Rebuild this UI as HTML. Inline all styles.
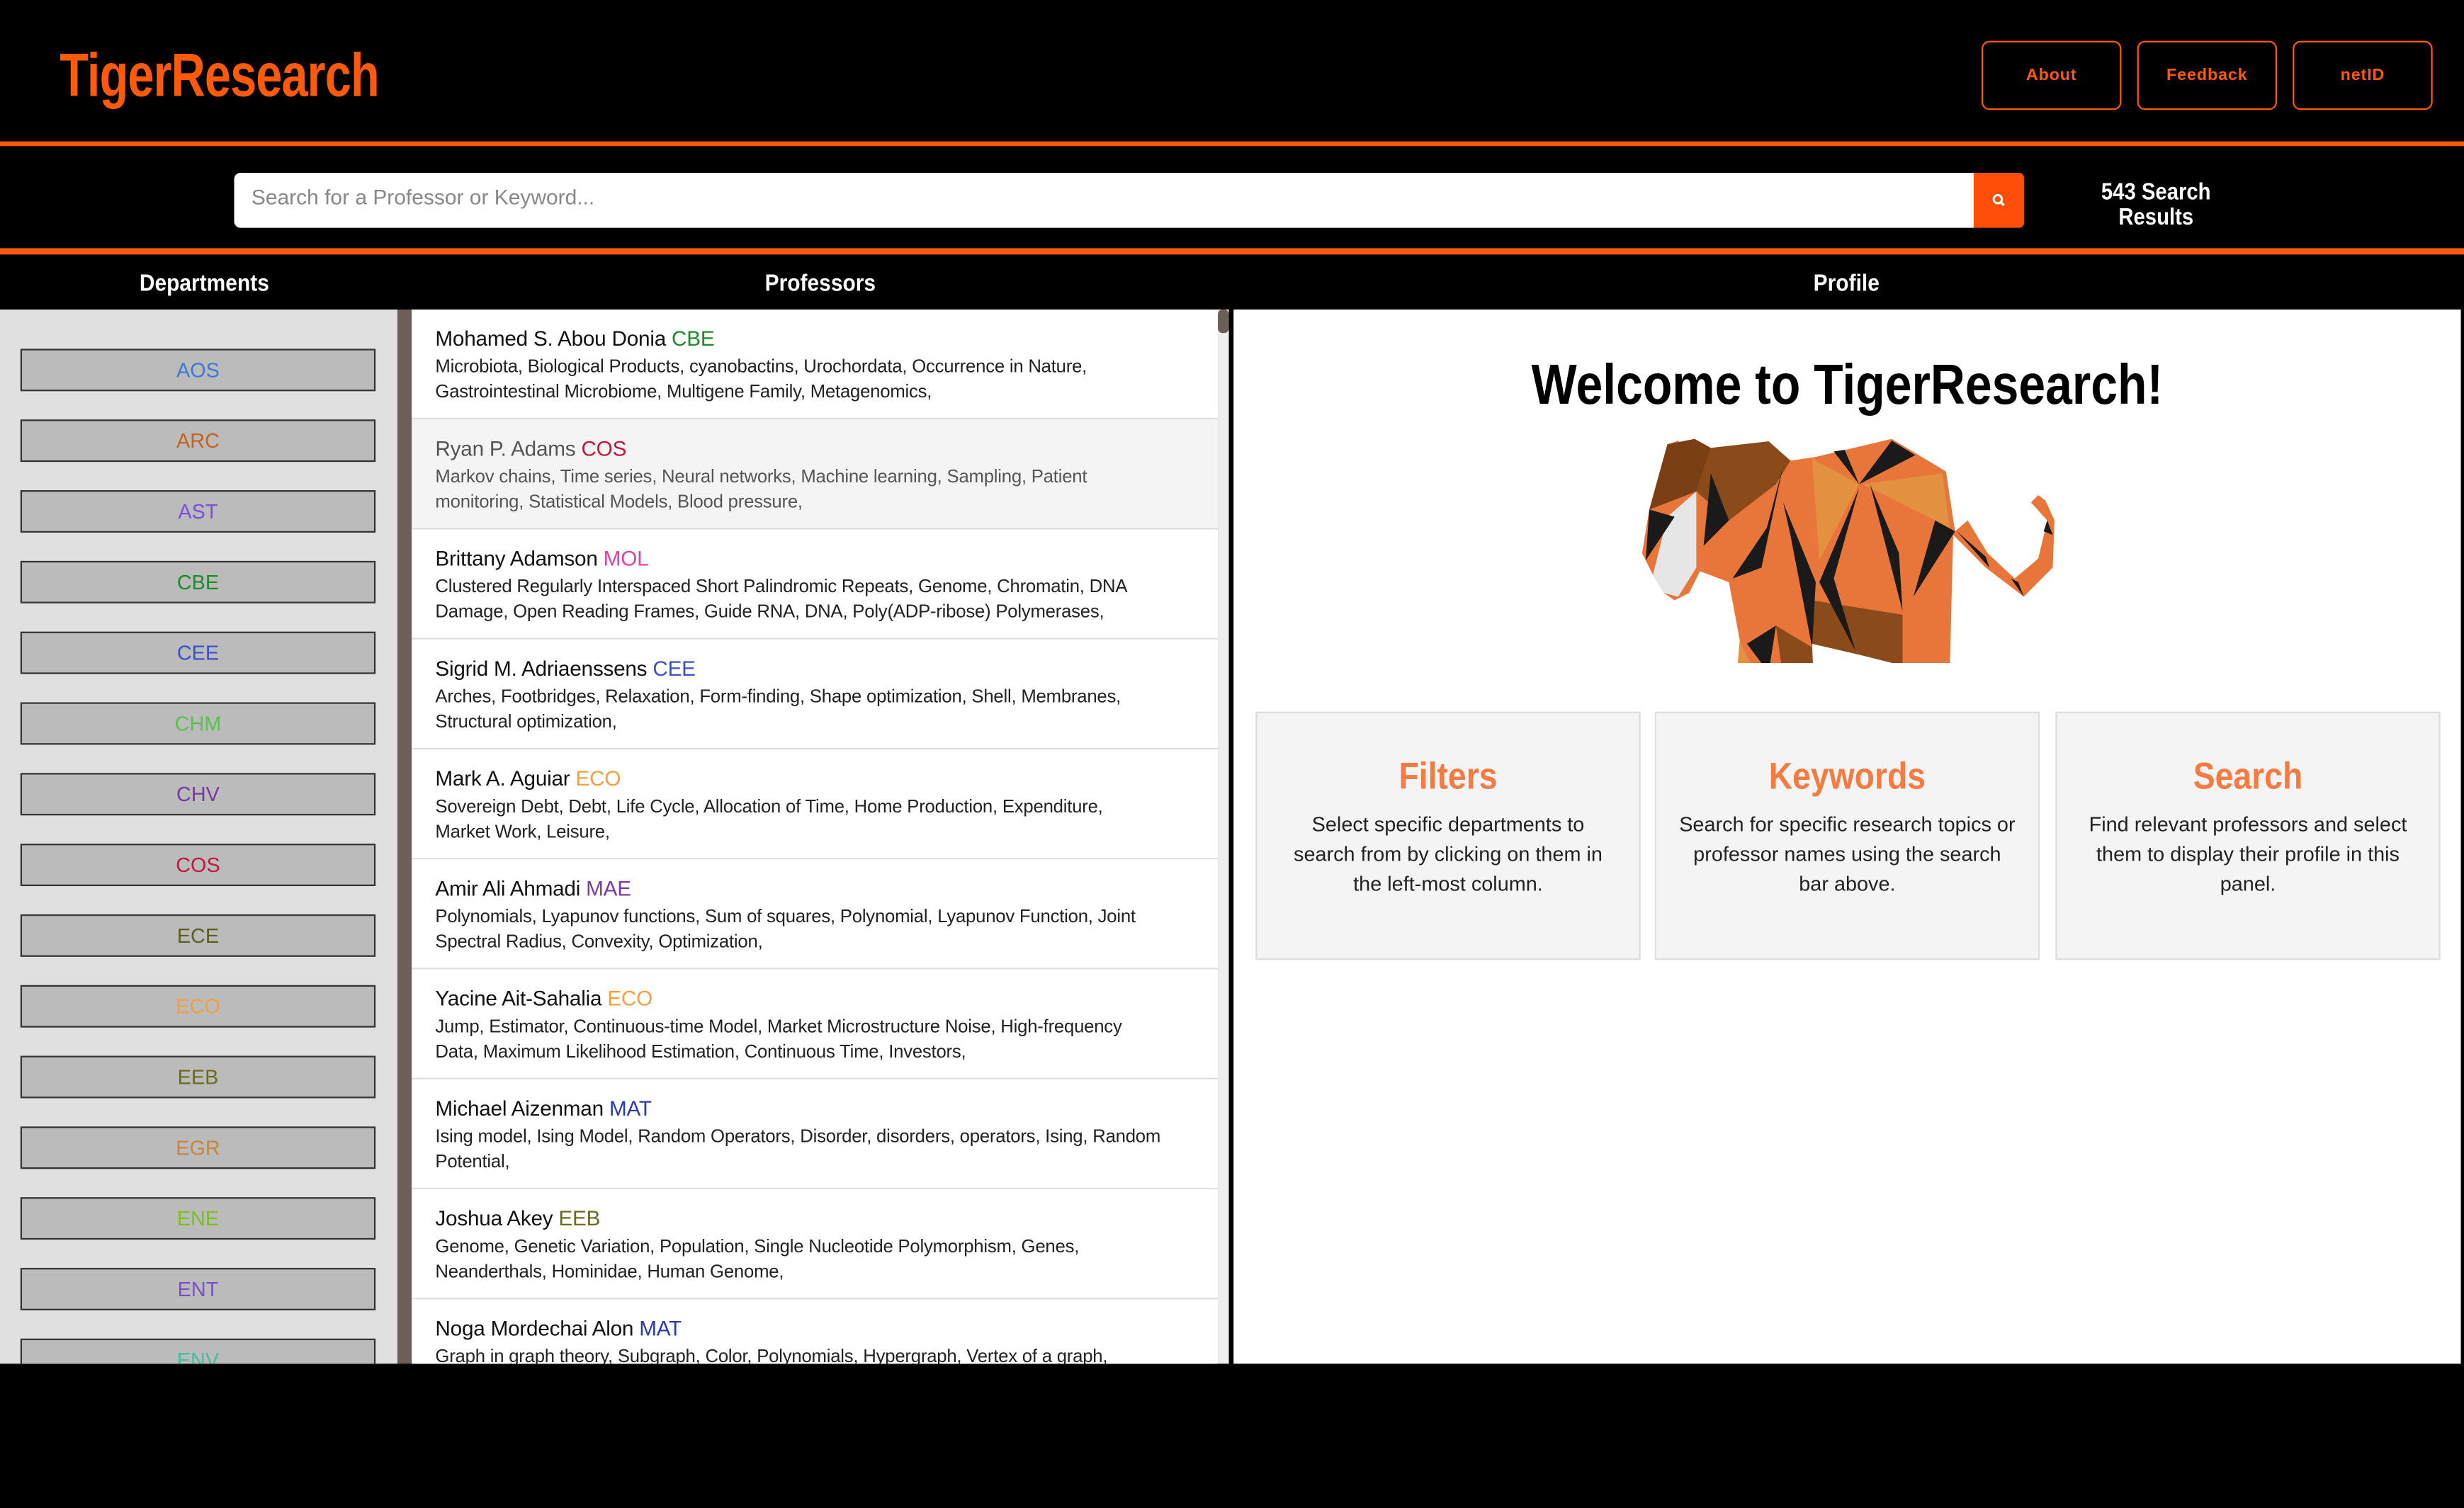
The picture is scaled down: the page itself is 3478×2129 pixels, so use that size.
<!DOCTYPE html>
<html><head><meta charset="utf-8">
<style>
html,body{margin:0;padding:0;background:#000;overflow:hidden;width:3478px;height:2128px}
#w{position:absolute;left:0;top:0;width:1568px;height:960px;transform:scale(2.21811);transform-origin:0 0;font-family:"Liberation Sans",sans-serif;background:#000}
.a{position:absolute}
.logo{left:38px;top:27px;font-weight:bold;font-size:39px;color:#ff5a0a;letter-spacing:-0.5px;transform:scaleX(0.77);transform-origin:0 0}
.btn{top:26px;width:87px;height:42px;border:1.5px solid #ff5a0a;border-radius:5px;color:#ff5a0a;font-size:10.5px;font-weight:bold;text-align:center;line-height:42px;letter-spacing:.4px}
.line{left:0;width:1568px;height:3px;background:#ff5a0a}
.hd{font-weight:bold;color:#fff;font-size:15px;top:172px;transform:translateX(-50%) scaleX(0.9)}
.dept{left:13px;width:224px;height:25px;background:#bbb;border:1.5px solid #333;text-align:center;font-size:13px;line-height:25px}
.row{position:absolute;left:262px;width:513px;height:69px;border-bottom:1.5px solid #ddd;background:#fff;font-size:11.6px;color:#222;letter-spacing:-0.1px}
.row .n{position:absolute;left:15px;top:11px;font-size:13.4px;color:#111}
.row .k{position:absolute;left:15px;top:29px;line-height:16.3px;white-space:nowrap}
.card{top:453px;width:243px;height:156px;background:#f4f4f4;border:1px solid #ddd;text-align:center}
.card h3{margin:27px 0 0;color:#f47b42;font-size:24px;font-weight:bold;transform:scaleX(0.87)}
.card p{margin:6px 0 0;font-size:13px;line-height:19px;color:#222;white-space:nowrap}
</style></head><body><div id="w">
<div class="a logo">TigerResearch</div>
<div class="a btn" style="left:1261px">About</div>
<div class="a btn" style="left:1360px">Feedback</div>
<div class="a btn" style="left:1459px">netID</div>
<div class="a line" style="top:90px"></div>
<div class="a" style="left:149px;top:110px;width:1107px;height:35px;background:#fff;border-radius:4px 0 0 4px"></div>
<div class="a" style="left:160px;top:118px;font-size:13.5px;color:#888">Search for a Professor or Keyword...</div>
<div class="a" style="left:1256px;top:110px;width:32px;height:35px;background:#ff4d0a;border-radius:0 3px 3px 0">
<svg width="32" height="35" viewBox="0 0 32 35"><circle cx="15.3" cy="16.8" r="2.6" fill="none" stroke="#fff" stroke-width="1.4"/><line x1="17.2" y1="18.7" x2="19.2" y2="20.7" stroke="#fff" stroke-width="1.6"/></svg></div>
<div class="a" style="left:1322px;top:115px;width:100px;text-align:center;color:#fff;font-weight:bold;font-size:15px;line-height:16px;transform:scaleX(0.88)">543 Search<br>Results</div>
<div class="a line" style="top:158px;height:4px"></div>
<div class="a hd" style="left:130px">Departments</div>
<div class="a hd" style="left:522px">Professors</div>
<div class="a hd" style="left:1175px">Profile</div>
<div class="a" style="left:0;top:197px;width:253px;height:671px;background:#e0e0e0;overflow:hidden">
<div class="a dept" style="top:25px;color:#3b78d8">AOS</div>
<div class="a dept" style="top:70px;color:#c8601e">ARC</div>
<div class="a dept" style="top:115px;color:#7a4fe0">AST</div>
<div class="a dept" style="top:160px;color:#1f8a2a">CBE</div>
<div class="a dept" style="top:205px;color:#3a4fcc">CEE</div>
<div class="a dept" style="top:250px;color:#59c24a">CHM</div>
<div class="a dept" style="top:295px;color:#7a3aa0">CHV</div>
<div class="a dept" style="top:340px;color:#c0183c">COS</div>
<div class="a dept" style="top:385px;color:#5e5e1a">ECE</div>
<div class="a dept" style="top:430px;color:#f0a040">ECO</div>
<div class="a dept" style="top:475px;color:#6b6b20">EEB</div>
<div class="a dept" style="top:520px;color:#c8843c">EGR</div>
<div class="a dept" style="top:565px;color:#7cc020">ENE</div>
<div class="a dept" style="top:610px;color:#7a50c8">ENT</div>
<div class="a dept" style="top:655px;color:#40c0a0">ENV</div>
</div>
<div class="a" style="left:253px;top:197px;width:9px;height:671px;background:#6b5f58"></div>
<div class="a" style="left:262px;top:197px;width:513px;height:671px;overflow:hidden;background:#fff">
<div class="row" style="left:0;top:0"><span class="n">Mohamed S. Abou Donia <span style="color:#1f8a2a">CBE</span></span><span class="k">Microbiota, Biological Products, cyanobactins, Urochordata, Occurrence in Nature,<br>Gastrointestinal Microbiome, Multigene Family, Metagenomics,</span></div>
<div class="row" style="left:0;top:70px;background:#f4f4f4;color:#555"><span class="n" style="color:#555">Ryan P. Adams <span style="color:#c0183c">COS</span></span><span class="k">Markov chains, Time series, Neural networks, Machine learning, Sampling, Patient<br>monitoring, Statistical Models, Blood pressure,</span></div>
<div class="row" style="left:0;top:140px"><span class="n">Brittany Adamson <span style="color:#e040a0">MOL</span></span><span class="k">Clustered Regularly Interspaced Short Palindromic Repeats, Genome, Chromatin, DNA<br>Damage, Open Reading Frames, Guide RNA, DNA, Poly(ADP-ribose) Polymerases,</span></div>
<div class="row" style="left:0;top:210px"><span class="n">Sigrid M. Adriaenssens <span style="color:#3a4fcc">CEE</span></span><span class="k">Arches, Footbridges, Relaxation, Form-finding, Shape optimization, Shell, Membranes,<br>Structural optimization,</span></div>
<div class="row" style="left:0;top:280px"><span class="n">Mark A. Aguiar <span style="color:#f0a040">ECO</span></span><span class="k">Sovereign Debt, Debt, Life Cycle, Allocation of Time, Home Production, Expenditure,<br>Market Work, Leisure,</span></div>
<div class="row" style="left:0;top:350px"><span class="n">Amir Ali Ahmadi <span style="color:#7a3aa0">MAE</span></span><span class="k">Polynomials, Lyapunov functions, Sum of squares, Polynomial, Lyapunov Function, Joint<br>Spectral Radius, Convexity, Optimization,</span></div>
<div class="row" style="left:0;top:420px"><span class="n">Yacine Ait-Sahalia <span style="color:#f0a040">ECO</span></span><span class="k">Jump, Estimator, Continuous-time Model, Market Microstructure Noise, High-frequency<br>Data, Maximum Likelihood Estimation, Continuous Time, Investors,</span></div>
<div class="row" style="left:0;top:490px"><span class="n">Michael Aizenman <span style="color:#2a3ab0">MAT</span></span><span class="k">Ising model, Ising Model, Random Operators, Disorder, disorders, operators, Ising, Random<br>Potential,</span></div>
<div class="row" style="left:0;top:560px"><span class="n">Joshua Akey <span style="color:#6b6b20">EEB</span></span><span class="k">Genome, Genetic Variation, Population, Single Nucleotide Polymorphism, Genes,<br>Neanderthals, Hominidae, Human Genome,</span></div>
<div class="row" style="left:0;top:630px"><span class="n">Noga Mordechai Alon <span style="color:#2a3ab0">MAT</span></span><span class="k">Graph in graph theory, Subgraph, Color, Polynomials, Hypergraph, Vertex of a graph,</span></div>
</div>
<div class="a" style="left:775px;top:197px;width:7px;height:671px;background:#eee"></div>
<div class="a" style="left:775px;top:197px;width:7px;height:15px;background:#6b5f58;border-radius:3px"></div>
<div class="a" style="left:785px;top:197px;width:781px;height:671px;background:#fff"></div>
<div class="a" style="left:785px;top:224px;width:781px;text-align:center;font-weight:bold;font-size:36px;color:#000;transform:scaleX(0.85)">Welcome to TigerResearch!</div>
<svg class="a" style="left:992px;top:232px" width="361" height="190" viewBox="0 0 1568 823" preserveAspectRatio="none">
<polygon fill="#e8763a" points="300,220 330,210 355,240 375,205 420,230 580,212 640,265 710,255 920,205 1070,295 1095,460 1130,430 1185,520 1260,590 1325,535 1350,430 1305,380 1325,360 1345,375 1370,430 1365,560 1285,640 1180,560 1090,470 1080,860 1085,1160 990,1165 980,1080 950,830 830,800 700,770 715,1120 600,1120 610,1090 650,1080 600,870 560,890 470,1130 370,1130 430,1060 480,1000 500,760 470,600 390,570 360,630 320,650 290,630 260,580 230,520 250,400"/>
<polygon fill="#e39040" points="700,260 830,330 720,540"/>
<polygon fill="#e39040" points="840,330 1060,300 1080,450"/>
<polygon fill="#e39040" points="480,1000 560,890 500,760"/>
<polygon fill="#8a4a1a" points="420,230 580,212 640,265 600,330 470,430 380,350"/>
<polygon fill="#7a3f15" points="300,220 375,205 420,230 380,350 250,400"/>
<polygon fill="#8a4a1a" points="700,650 950,690 950,830 830,800 700,770"/>
<polygon fill="#8a4a1a" points="600,720 700,780 715,1120 650,1080"/>
<polygon fill="#e6e6e6" points="300,420 380,350 380,560 330,640 290,630 260,580"/>
<polygon fill="#1a1a1a" points="760,240 830,330 790,235"/>
<polygon fill="#1a1a1a" points="830,330 920,210 985,250"/>
<polygon fill="#1a1a1a" points="620,280 560,560 480,590 575,450"/>
<polygon fill="#1a1a1a" points="620,380 710,600 700,780 640,470"/>
<polygon fill="#1a1a1a" points="830,340 720,600 820,790 760,590"/>
<polygon fill="#1a1a1a" points="860,330 950,680 940,520"/>
<polygon fill="#1a1a1a" points="1040,430 1095,460 980,640"/>
<polygon fill="#1a1a1a" points="420,300 470,430 400,500"/>
<polygon fill="#1a1a1a" points="250,400 320,420 240,540"/>
<polygon fill="#1a1a1a" points="520,770 600,720 580,850"/>
<polygon fill="#1a1a1a" points="560,890 440,1090 530,1050"/>
<polygon fill="#1a1a1a" points="1020,860 1080,870 1070,980"/>
<polygon fill="#1a1a1a" points="610,870 700,910 660,990"/>
<polygon fill="#1a1a1a" points="1000,1000 1060,1060 990,1080"/>
<polygon fill="#1a1a1a" points="1100,460 1180,530 1190,560"/>
<polygon fill="#1a1a1a" points="1250,590 1285,640 1270,600"/>
<polygon fill="#1a1a1a" points="1350,430 1365,470 1340,460"/>
</svg>
<div class="a card" style="left:799px"><h3>Filters</h3><p>Select specific departments to<br>search from by clicking on them in<br>the left-most column.</p></div>
<div class="a card" style="left:1053px"><h3>Keywords</h3><p>Search for specific research topics or<br>professor names using the search<br>bar above.</p></div>
<div class="a card" style="left:1308px"><h3>Search</h3><p>Find relevant professors and select<br>them to display their profile in this<br>panel.</p></div>
</div></body></html>
